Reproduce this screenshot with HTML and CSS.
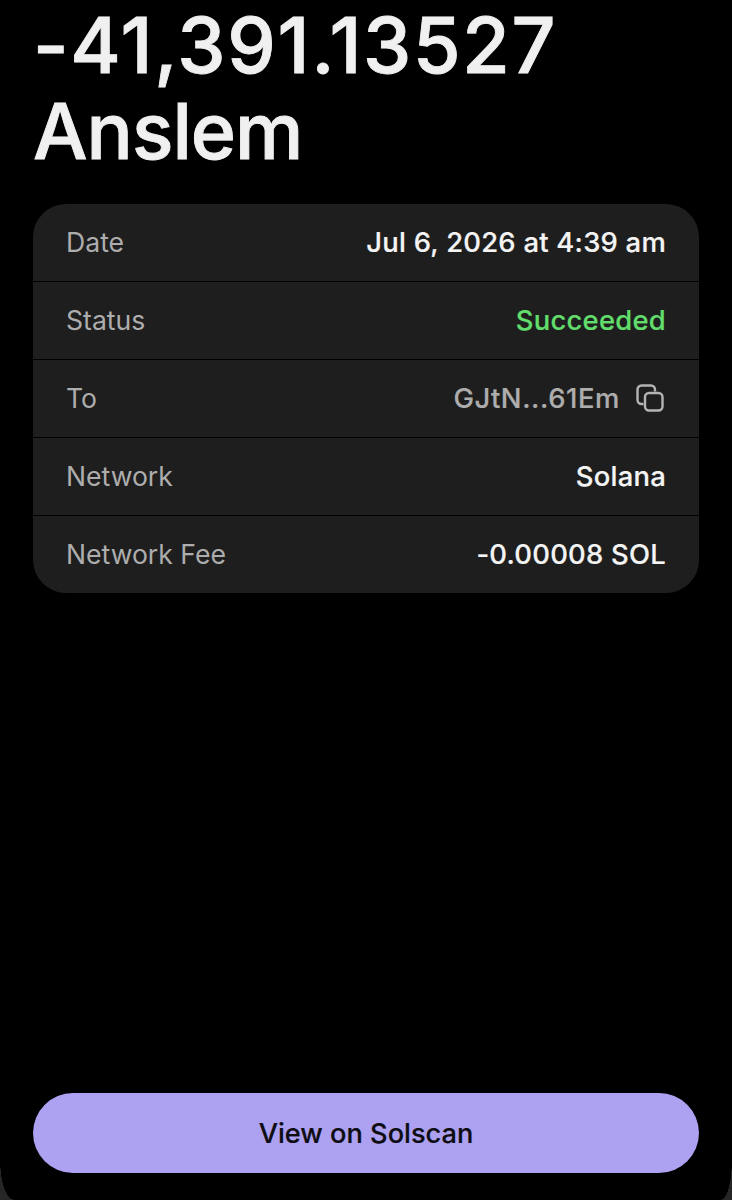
FILE: index.html
```html
<!DOCTYPE html>
<html lang="en">
<head>
<meta charset="utf-8">
<title>Transaction</title>
<link rel="stylesheet" href="styles.css">
</head>
<body>
<main class="screen">
  <h1 class="title"><span class="amount">-41,391.13527</span><br>Anslem</h1>
  <section class="card">
    <div class="row"><span class="label">Date</span><span class="value">Jul 6, 2026 at 4:39 am</span></div>
    <div class="row"><span class="label">Status</span><span class="value success">Succeeded</span></div>
    <div class="row"><span class="label">To</span><span class="value muted">GJtN...61Em<svg class="copy" viewBox="0 0 30 30" width="30" height="30" fill="none" stroke="#b4b4b4" stroke-width="2.4"><path d="M8.5 21H6.5a4 4 0 0 1-4-4V6.5a4 4 0 0 1 4-4H16a4 4 0 0 1 4 4V8.5"/><rect x="10" y="10" width="17.5" height="17.5" rx="4"/></svg></span></div>
    <div class="row"><span class="label">Network</span><span class="value">Solana</span></div>
    <div class="row"><span class="label">Network Fee</span><span class="value">-0.00008 SOL</span></div>
  </section>
  <div class="spacer"></div>
  <button class="action">View on Solscan</button>
</main>
<div class="corner corner-left"></div>
<div class="corner corner-right"></div>
</body>
</html>
```
FILE: styles.css
```css
* { box-sizing: border-box; }
html, body { margin: 0; height: 100%; background: #000; }
body { overflow: hidden; position: relative; font-family: Inter, "Liberation Sans", sans-serif; }
.screen { height: 1200px; display: flex; flex-direction: column; padding: 0 33px 27px 33px; }
.title { margin: 0; padding: 2px 0 0 0; font-size: 77px; line-height: 86px; font-weight: 500; color: #f0f0f0; letter-spacing: -1px; -webkit-text-stroke: 0.9px #f0f0f0; }
.amount { letter-spacing: 1.7px; }
.card { margin-top: 30px; background: #1e1e1e; border-radius: 33px; overflow: hidden; }
.row { height: 78px; display: flex; align-items: center; justify-content: space-between; padding: 0 33px 2px 33px; border-top: 1px solid #000; font-size: 26.6px; }
.row:first-child { border-top: 0; height: 77px; }
.label { color: #adadad; font-weight: 400; }
.value { color: #f4f4f4; font-weight: 500; font-size: 27.4px; letter-spacing: 0.25px; display: flex; align-items: center; gap: 15px; -webkit-text-stroke: 0.2px currentColor; }
.success { color: #62dd6c; }
.muted { color: #adadad; letter-spacing: 0.6px; }
.copy { display: block; margin-right: 1px; }
.spacer { flex: 1; }
.action { height: 80px; border: 0; border-radius: 40px; background: #ada1f1; color: #0d0d12; font: 500 27.2px Inter, "Liberation Sans", sans-serif; -webkit-text-stroke: 0.2px #0d0d12; }
.corner { position: absolute; bottom: 0; width: 14px; height: 40px; }
.corner-left { left: 0; background: radial-gradient(ellipse 100% 100% at 100% 0, transparent 98%, #262626 100%); }
.corner-right { right: 0; width: 11px; background: radial-gradient(ellipse 100% 100% at 0 0, transparent 98%, #262626 100%); }
```
